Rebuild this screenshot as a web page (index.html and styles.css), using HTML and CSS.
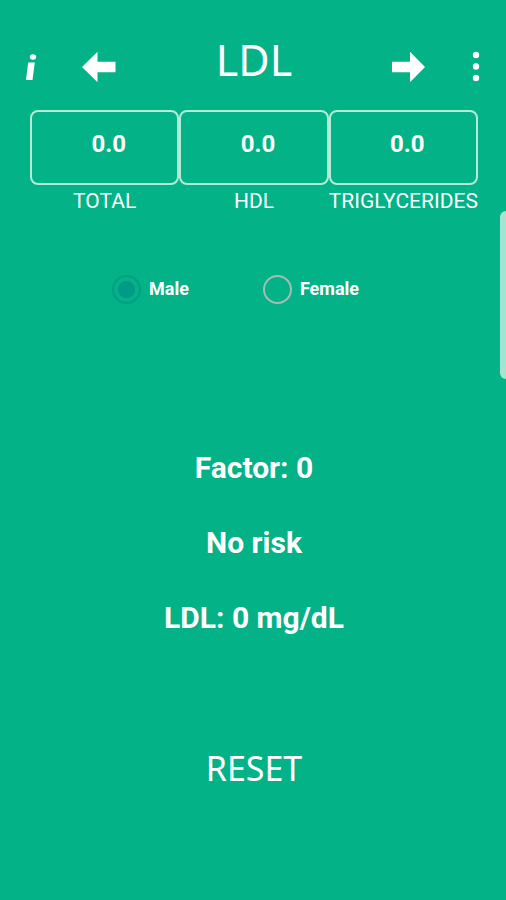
FILE: index.html
```html
<!DOCTYPE html>
<html lang="en">
<head>
<meta charset="utf-8">
<meta name="viewport" content="width=device-width, initial-scale=1">
<title>LDL</title>
<link rel="stylesheet" href="styles.css">
</head>
<body>
<header class="bar">
  <button class="icon-button" type="button" aria-label="Information">
    <svg width="12" height="28" viewBox="0 0 12 28"><path d="M2.200 9.500H8.800L6.500 27H0Z"/><ellipse cx="7" cy="4" rx="3.200" ry="2.800"/></svg>
  </button>
  <button class="icon-button arrow" type="button" aria-label="Previous">
    <svg width="34" height="32" viewBox="0 0 34 32"><path d="M0 16L15.500 .8V10.800H33.500V21.200H15.500V31.200Z"/></svg>
  </button>
  <h1 class="title">LDL</h1>
  <button class="icon-button arrow" type="button" aria-label="Next">
    <svg width="34" height="32" viewBox="0 0 34 32"><path d="M33 16L18 .8V10.800H0V21.200H18V31.200Z"/></svg>
  </button>
  <button class="icon-button" type="button" aria-label="Menu">
    <svg width="8" height="32" viewBox="0 0 8 32"><circle cx="4" cy="4" r="3.200"/><circle cx="4" cy="15.500" r="3.200"/><circle cx="4" cy="27" r="3.200"/></svg>
  </button>
</header>
<main>
  <form class="form">
    <div class="fields">
      <div class="field"><input class="value" id="total" type="text" inputmode="decimal" value="0.0"><label for="total">TOTAL</label></div>
      <div class="field"><input class="value" id="hdl" type="text" inputmode="decimal" value="0.0"><label for="hdl">HDL</label></div>
      <div class="field"><input class="value" id="tri" type="text" inputmode="decimal" value="0.0"><label for="tri">TRIGLYCERIDES</label></div>
    </div>
    <div class="sexes">
      <label class="sex"><input type="radio" name="sex" checked>Male</label>
      <label class="sex"><input type="radio" name="sex">Female</label>
    </div>
    <div class="results">
      <p>Factor: 0</p>
      <p>No risk</p>
      <p>LDL: 0 mg/dL</p>
    </div>
    <button class="reset" type="reset">RESET</button>
  </form>
</main>
<div class="edge-handle"></div>
</body>
</html>
```

FILE: styles.css
```css
* {
  box-sizing: border-box;
}

body {
  margin: 0;
  min-height: 100vh;
  overflow-x: hidden;
  background: #03b286;
  color: #fff;
  font-family: Roboto, "Liberation Sans", sans-serif;
}

.bar {
  display: flex;
  align-items: center;
  padding: 30px 26px 0;
}

.icon-button {
  display: flex;
  padding: 14px 0 0;
  border: 0;
  background: none;
  color: inherit;
}

.icon-button svg {
  fill: currentColor;
}

.arrow:nth-child(2) {
  margin-left: 44px;
}

.arrow:nth-child(4) {
  margin-right: 46px;
}

.title {
  flex: 1;
  margin: 0;
  text-align: center;
  font: 400 43px/60px "Noto Sans", sans-serif;
}

.form {
  padding: 20px 28px 0 30px;
}

.fields {
  display: grid;
  grid-template-columns: repeat(3, 1fr);
}

.field {
  display: flex;
  flex-direction: column;
  align-items: center;
  font-size: 21px;
  line-height: 32px;
  white-space: nowrap;
}

.value {
  width: 100%;
  height: 75px;
  padding: 0 0 8px 8px;
  border: 2px solid #b4ecd8;
  border-radius: 8px;
  background: none;
  color: inherit;
  font: 700 24px/32px Roboto, sans-serif;
  text-align: center;
}

.sexes {
  display: flex;
  gap: 74px;
  padding: 56px 0 0 82px;
}

.sex {
  display: flex;
  align-items: center;
  gap: 8px;
  font-size: 18px;
  font-weight: 700;
  line-height: 32px;
}

.sex input {
  appearance: none;
  width: 29px;
  height: 29px;
  margin: 0;
  border: 2px solid #a3bdb5;
  border-radius: 50%;
}

.sex input:checked {
  border-color: #059d85;
  background: radial-gradient(circle, #039987 8px, transparent 9px);
}

.results {
  display: grid;
  gap: 39px;
  padding-top: 145px;
  text-align: center;
  font-size: 30px;
  font-weight: 700;
  line-height: 36px;
}

.results p {
  margin: 0;
}

.reset {
  display: block;
  margin: 108px auto 0;
  padding: 0;
  border: 0;
  background: none;
  color: inherit;
  font: 400 34px/48px "Noto Sans", sans-serif;
}

.edge-handle {
  position: absolute;
  top: 211px;
  right: 0;
  width: 6px;
  height: 168px;
  border-radius: 6px 0 0 6px;
  background: #a5e4d0;
}
```
